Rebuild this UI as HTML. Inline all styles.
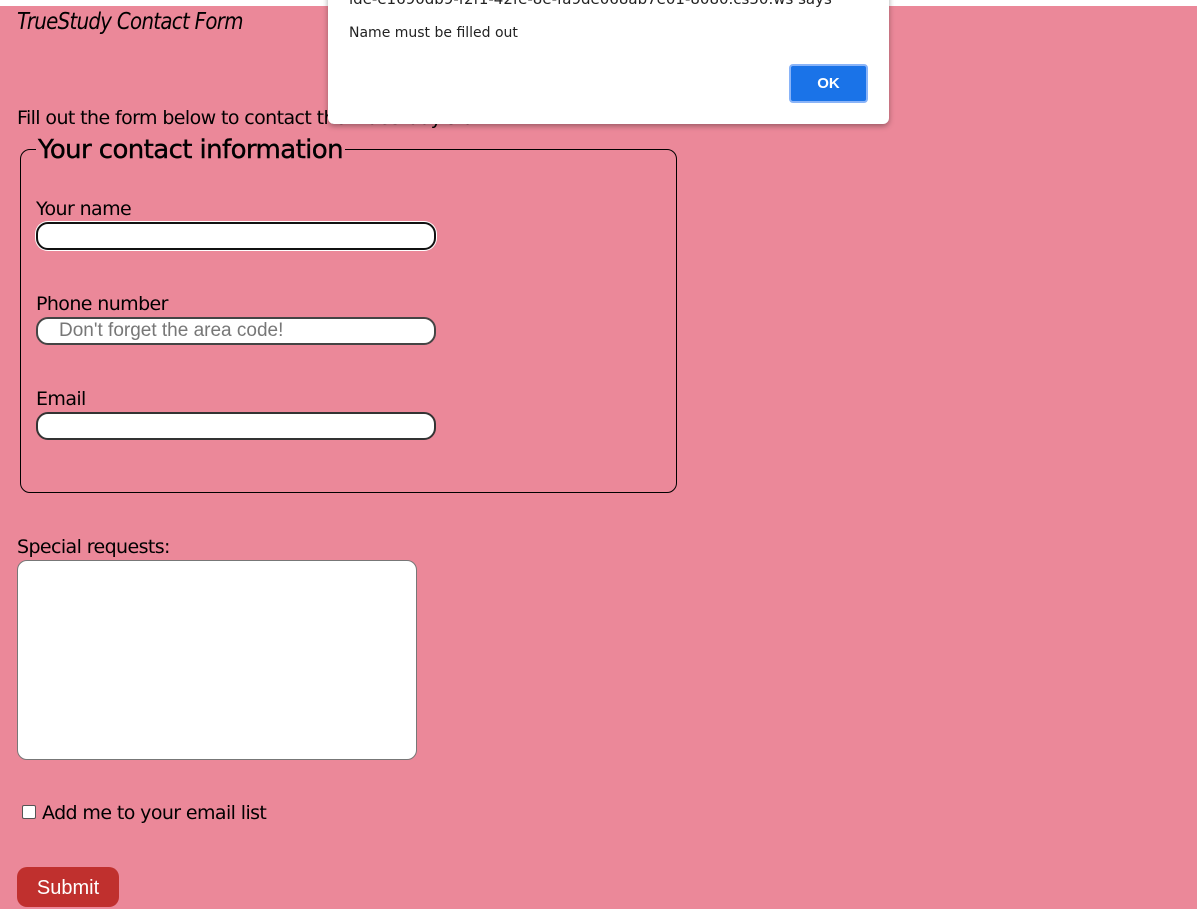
<!DOCTYPE html>
<html><head><style>
body{margin:0;width:1197px;height:903px;background:#eb8899;font-family:"DejaVu Sans","Liberation Sans",sans-serif;position:relative;overflow:hidden;color:#000}
.a{position:absolute;white-space:nowrap}
.in{position:absolute;left:36px;width:396px;height:24px;background:#fff;border:2px solid #666;border-radius:12px}
.t{font-size:19px;letter-spacing:-0.6px}
</style></head><body>
<div class="a" style="left:0;top:0;width:1197px;height:6px;background:#fff"></div>
<div class="a" style="left:17px;top:9px;font-size:23px;font-style:italic;font-family:'DejaVu Sans',sans-serif;letter-spacing:-0.8px;transform:scaleX(0.86);transform-origin:left">TrueStudy Contact Form</div>
<div class="a t" style="left:17px;top:107px">Fill out the form below to contact the TrueStudy staff.</div>
<div class="a" style="left:20px;top:149px;width:655px;height:342px;border:1px solid #000;border-radius:10px"></div>
<div class="a" style="left:36px;top:135px;font-size:26px;font-weight:500;background:#eb8899;padding:0 2px;letter-spacing:-0.6px;-webkit-text-stroke:0.4px #000">Your contact information</div>
<div class="a t" style="left:36px;top:198px">Your name</div>
<div class="in" style="top:222px;border-color:#111;box-shadow:0 0 0 1px #fff"></div>
<div class="a t" style="left:36px;top:293px">Phone number</div>
<div class="in" style="top:317px;border-color:#444"></div>
<div class="a" style="left:59px;top:320px;font-size:19px;color:#777;font-family:'Liberation Sans',sans-serif">Don't forget the area code!</div>
<div class="a t" style="left:36px;top:388px">Email</div>
<div class="in" style="top:412px;border-color:#333"></div>
<div class="a t" style="left:17px;top:536px">Special requests:</div>
<div class="a" style="left:17px;top:560px;width:398px;height:198px;background:#fff;border:1px solid #777;border-radius:10px"></div>
<div class="a" style="left:22px;top:805px;width:12px;height:12px;background:#fff;border:1px solid #555;border-radius:2px"></div>
<div class="a t" style="left:42px;top:802px">Add me to your email list</div>
<div class="a" style="left:17px;top:867px;width:102px;height:40px;background:#c0302e;border-radius:10px;color:#fff;font-family:'Liberation Sans',sans-serif;font-size:20px;text-align:center;line-height:42px">Submit</div>
<div class="a" style="left:328px;top:-10px;width:561px;height:134px;background:#fff;border-radius:0 0 6px 6px;box-shadow:0 2px 6px rgba(0,0,0,.35)">
<div class="a" style="left:21px;top:0;font-size:15px;color:#222">ide-e1690db9-f2f1-42fe-8e-fa9de068ab7e01-8080.cs50.ws says</div>
<div class="a" style="left:21px;top:35px;font-size:14px;color:#222">Name must be filled out</div>
<div class="a" style="left:461px;top:74px;width:75px;height:35px;background:#1a73e8;border:2px solid #8ab4f8;border-radius:4px;color:#fff;font-size:15px;font-weight:bold;text-align:center;line-height:35px;font-family:'Liberation Sans',sans-serif">OK</div>
</div>
</body></html>
